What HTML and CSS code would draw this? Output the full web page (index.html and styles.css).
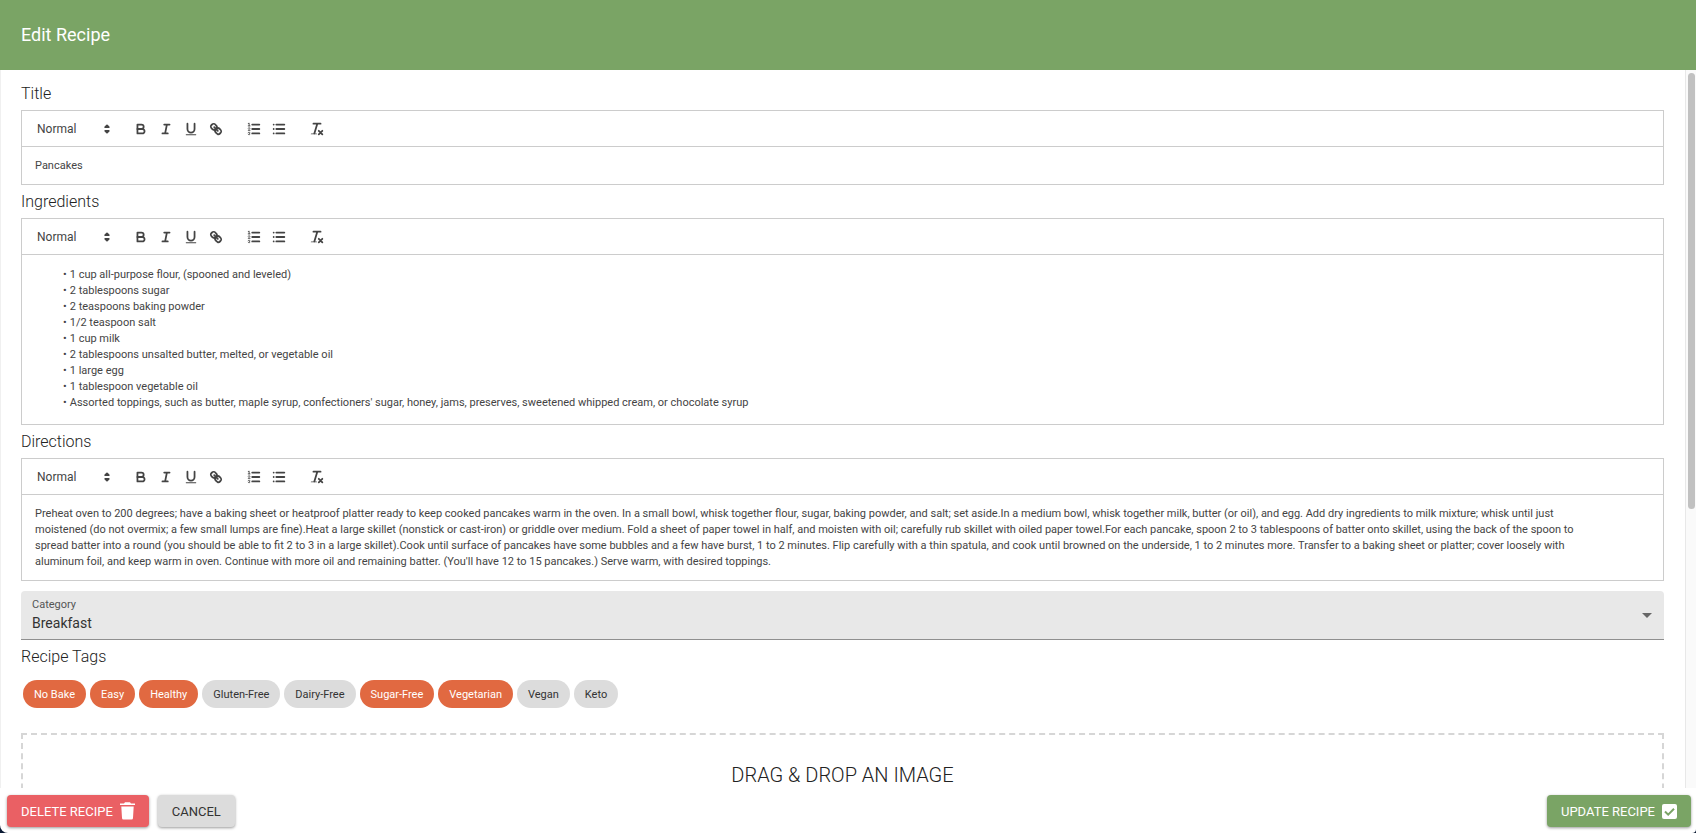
FILE: index.html
```html
<!DOCTYPE html>
<html lang="en">
<head>
<meta charset="utf-8">
<title>Edit Recipe</title>
<link rel="stylesheet" href="styles.css">
</head>
<body>
<svg class="sprite" aria-hidden="true">
  <defs>
    <symbol id="i-bold" viewBox="0 0 18 18"><path class="s" d="M5,4H9.5A2.5,2.5,0,0,1,12,6.5v0A2.5,2.5,0,0,1,9.5,9H5V4Z"/><path class="s" d="M5,9h5.5A2.5,2.5,0,0,1,13,11.5v0A2.5,2.5,0,0,1,10.5,14H5V9Z"/></symbol>
    <symbol id="i-italic" viewBox="0 0 18 18"><path class="s" d="M7 4H13M5 14H11M8 14L10 4"/></symbol>
    <symbol id="i-underline" viewBox="0 0 18 18"><path class="s" d="M5,3V9a4.012,4.012,0,0,0,4,4H9a4.012,4.012,0,0,0,4-4V3"/><rect class="f" height="1" rx=".5" ry=".5" width="12" x="3" y="15"/></symbol>
    <symbol id="i-link" viewBox="0 0 18 18"><path class="s" d="M7 7L11 11"/><path class="s" d="M8.9,4.577a3.476,3.476,0,0,1,.36,4.679A3.476,3.476,0,0,1,4.577,8.9C3.185,7.5,2.035,6.4,4.217,4.217S7.5,3.185,8.9,4.577Z"/><path class="s" d="M13.423,9.1a3.476,3.476,0,0,0-4.679-.36,3.476,3.476,0,0,0,.36,4.679c1.392,1.392,2.5,2.542,4.679.36S14.815,10.5,13.423,9.1Z"/></symbol>
    <symbol id="i-ordered" viewBox="0 0 18 18"><path class="s" d="M7 4H15M7 9H15M7 14H15"/><path class="t" d="M2.5 5.5H4.5"/><path class="f" d="M3.5,6A0.5,0.5,0,0,1,3,5.5V3.085l-0.276.138A0.5,0.5,0,0,1,2.053,3c-0.124-.247-0.023-0.324.224-0.447l1-.5A0.5,0.5,0,0,1,4,2.5v3A0.5,0.5,0,0,1,3.5,6Z"/><path class="t" d="M4.5,10.5h-2c0-.234,1.85-1.076,1.85-2.234A0.959,0.959,0,0,0,2.5,8.156"/><path class="t" d="M2.5,14.846a0.959,0.959,0,0,0,1.85-.109A0.7,0.7,0,0,0,3.75,14a0.688,0.688,0,0,0,.6-0.736,0.959,0.959,0,0,0-1.85-.109"/></symbol>
    <symbol id="i-bullet" viewBox="0 0 18 18"><path class="s" d="M6 4H15M6 9H15M6 14H15M3 4H3.01M3 9H3.01M3 14H3.01"/></symbol>
    <symbol id="i-clean" viewBox="0 0 18 18"><path class="s" d="M5 3H13M6 14L9.35 3M11 11L15 15M15 11L11 15"/><rect class="f" height="1" rx=".5" ry=".5" width="7" x="2" y="14"/></symbol>
    <symbol id="i-sort" viewBox="0 0 18 18"><path class="fs" d="M7 11L9 13L11 11ZM7 7L9 5L11 7Z"/></symbol>
  </defs>
</svg>
<form class="dialog" aria-labelledby="dialog-title">
  <header class="dialog-header"><h1 id="dialog-title">Edit Recipe</h1></header>
  <div class="scroller">
    <main class="content">
      <h2 id="l-title">Title</h2>
      <section class="editor">
        <div class="toolbar">
          <span class="picker"><select aria-label="Title text style"><option>Normal</option><option>Heading</option></select><svg class="icon"><use href="#i-sort"/></svg></span>
          <div class="tools"><button type="button" aria-label="Bold"><svg class="icon"><use href="#i-bold"/></svg></button><button type="button" aria-label="Italic"><svg class="icon"><use href="#i-italic"/></svg></button><button type="button" aria-label="Underline"><svg class="icon"><use href="#i-underline"/></svg></button><button type="button" aria-label="Link"><svg class="icon"><use href="#i-link"/></svg></button></div>
          <div class="tools"><button type="button" aria-label="Numbered list"><svg class="icon"><use href="#i-ordered"/></svg></button><button type="button" aria-label="Bulleted list"><svg class="icon"><use href="#i-bullet"/></svg></button></div>
          <div class="tools"><button type="button" aria-label="Clear formatting"><svg class="icon"><use href="#i-clean"/></svg></button></div>
        </div>
        <div class="editor-body" contenteditable="true" role="textbox" aria-labelledby="l-title" spellcheck="false"><p>Pancakes</p></div>
      </section>

      <h2 id="l-ingredients">Ingredients</h2>
      <section class="editor">
        <div class="toolbar">
          <span class="picker"><select aria-label="Ingredients text style"><option>Normal</option><option>Heading</option></select><svg class="icon"><use href="#i-sort"/></svg></span>
          <div class="tools"><button type="button" aria-label="Bold"><svg class="icon"><use href="#i-bold"/></svg></button><button type="button" aria-label="Italic"><svg class="icon"><use href="#i-italic"/></svg></button><button type="button" aria-label="Underline"><svg class="icon"><use href="#i-underline"/></svg></button><button type="button" aria-label="Link"><svg class="icon"><use href="#i-link"/></svg></button></div>
          <div class="tools"><button type="button" aria-label="Numbered list"><svg class="icon"><use href="#i-ordered"/></svg></button><button type="button" aria-label="Bulleted list"><svg class="icon"><use href="#i-bullet"/></svg></button></div>
          <div class="tools"><button type="button" aria-label="Clear formatting"><svg class="icon"><use href="#i-clean"/></svg></button></div>
        </div>
        <div class="editor-body" contenteditable="true" role="textbox" aria-labelledby="l-ingredients" spellcheck="false">
          <ul>
            <li>1 cup all-purpose flour, (spooned and leveled)</li>
            <li>2 tablespoons sugar</li>
            <li>2 teaspoons baking powder</li>
            <li>1/2 teaspoon salt</li>
            <li>1 cup milk</li>
            <li>2 tablespoons unsalted butter, melted, or vegetable oil</li>
            <li>1 large egg</li>
            <li>1 tablespoon vegetable oil</li>
            <li>Assorted toppings, such as butter, maple syrup, confectioners' sugar, honey, jams, preserves, sweetened whipped cream, or chocolate syrup</li>
          </ul>
        </div>
      </section>

      <h2 id="l-directions">Directions</h2>
      <section class="editor">
        <div class="toolbar">
          <span class="picker"><select aria-label="Directions text style"><option>Normal</option><option>Heading</option></select><svg class="icon"><use href="#i-sort"/></svg></span>
          <div class="tools"><button type="button" aria-label="Bold"><svg class="icon"><use href="#i-bold"/></svg></button><button type="button" aria-label="Italic"><svg class="icon"><use href="#i-italic"/></svg></button><button type="button" aria-label="Underline"><svg class="icon"><use href="#i-underline"/></svg></button><button type="button" aria-label="Link"><svg class="icon"><use href="#i-link"/></svg></button></div>
          <div class="tools"><button type="button" aria-label="Numbered list"><svg class="icon"><use href="#i-ordered"/></svg></button><button type="button" aria-label="Bulleted list"><svg class="icon"><use href="#i-bullet"/></svg></button></div>
          <div class="tools"><button type="button" aria-label="Clear formatting"><svg class="icon"><use href="#i-clean"/></svg></button></div>
        </div>
        <div class="editor-body" contenteditable="true" role="textbox" aria-labelledby="l-directions" spellcheck="false"><p>Preheat oven to 200 degrees; have a baking sheet or heatproof platter ready to keep cooked pancakes warm in the oven. In a small bowl, whisk together flour, sugar, baking powder, and salt; set aside.In a medium bowl, whisk together milk, butter (or oil), and egg. Add dry ingredients to milk mixture; whisk until just<br>moistened (do not overmix; a few small lumps are fine).Heat a large skillet (nonstick or cast-iron) or griddle over medium. Fold a sheet of paper towel in half, and moisten with oil; carefully rub skillet with oiled paper towel.For each pancake, spoon 2 to 3 tablespoons of batter onto skillet, using the back of the spoon to<br>spread batter into a round (you should be able to fit 2 to 3 in a large skillet).Cook until surface of pancakes have some bubbles and a few have burst, 1 to 2 minutes. Flip carefully with a thin spatula, and cook until browned on the underside, 1 to 2 minutes more. Transfer to a baking sheet or platter; cover loosely with<br>aluminum foil, and keep warm in oven. Continue with more oil and remaining batter. (You'll have 12 to 15 pancakes.) Serve warm, with desired toppings.</p></div>
      </section>

      <div class="field">
        <label for="category">Category</label>
        <select id="category"><option>Breakfast</option><option>Lunch</option><option>Dinner</option></select>
        <svg class="caret" viewBox="0 0 10 5" aria-hidden="true"><path d="M0 0H10L5 5Z"/></svg>
      </div>

      <h2>Recipe Tags</h2>
      <div class="chips">
        <button type="button" class="chip" aria-pressed="true">No Bake</button>
        <button type="button" class="chip" aria-pressed="true">Easy</button>
        <button type="button" class="chip" aria-pressed="true">Healthy</button>
        <button type="button" class="chip" aria-pressed="false">Gluten-Free</button>
        <button type="button" class="chip" aria-pressed="false">Dairy-Free</button>
        <button type="button" class="chip" aria-pressed="true">Sugar-Free</button>
        <button type="button" class="chip" aria-pressed="true">Vegetarian</button>
        <button type="button" class="chip" aria-pressed="false">Vegan</button>
        <button type="button" class="chip" aria-pressed="false">Keto</button>
      </div>
      <div class="dropzone">DRAG &amp; DROP AN IMAGE</div>
    </main>
    <div class="rail" aria-hidden="true"><div class="thumb"></div></div>
  </div>
  <footer class="actions">
    <button type="button" class="btn danger">DELETE RECIPE<svg viewBox="0 0 15 18" aria-hidden="true"><path d="M0 1.5H4L5 .3H10L11 1.5H15V3H0ZM1.300 4.500H13.700L13 16Q13 17.500 11.500 17.500H3.500Q2 17.500 2 16Z"/></svg></button>
    <button type="button" class="btn">CANCEL</button>
    <button type="submit" class="btn primary">UPDATE RECIPE<svg viewBox="0 0 15 15" aria-hidden="true"><rect width="15" height="15" rx="2"/><path class="tick" d="M3 7.500L6.200 10.700L12 4.800"/></svg></button>
  </footer>
</form>
</body>
</html>
```
FILE: styles.css
```css
* { box-sizing: border-box; }
body {
  margin: 0;
  background: #0a1a33;
  font-family: Roboto, sans-serif;
  color: #444;
}
button, select { font-family: inherit; }
h1, h2, p, ul { margin: 0; padding: 0; }
.sprite { position: absolute; width: 0; height: 0; }
.s, .t, .fs { fill: none; stroke: #444; stroke-linecap: round; stroke-linejoin: round; stroke-width: 2; }
.t { stroke-width: 1; }
.f, .fs { fill: #444; }

.dialog {
  display: flex;
  flex-direction: column;
  height: 100vh;
  background: #fff;
  border-radius: 0 0 4px 8px;
  overflow: hidden;
}
.dialog-header {
  flex: none;
  padding: 20px 21px;
  background: #7aa465;
  color: #fff;
}
.dialog-header h1 { font-size: 18px; line-height: 30px; font-weight: 400; }

.scroller { flex: 1; min-height: 0; display: flex; border-left: 1px solid #f0f0f0; }
.content {
  flex: 1;
  min-width: 0;
  padding: 7px 21px 24px 20px;
  overflow-y: auto;
  scrollbar-width: none;
}
.rail { flex: none; width: 11px; padding: 3px 1px 0 2px; background: #fafafa; border-left: 1px solid #e8e8e8; }
.thumb { height: 61%; border-radius: 4px; background: #c1c1c1; }

h2 { padding-top: 1px; font-size: 16px; line-height: 32px; font-weight: 300; color: #222; }

.editor { border: 1px solid #ccc; }
.toolbar {
  display: flex;
  align-items: center;
  gap: 13px;
  padding: 6px 7px;
  border-bottom: 1px solid #ccc;
}
.icon { display: block; width: 16px; height: 16px; }
.picker { display: grid; align-items: center; width: 86px; height: 23px; }
.picker select, .picker .icon { grid-area: 1 / 1; }
.picker .icon { justify-self: end; pointer-events: none; }
.picker select {
  appearance: none;
  height: 23px;
  padding: 0 8px;
  border: 0;
  background: none;
  color: #444;
  font-size: 12px;
}
.tools { display: flex; }
.tools button {
  display: grid;
  place-items: center;
  width: 25px;
  height: 23px;
  padding: 0;
  border: 0;
  background: none;
}
.editor-body { padding: 11px 13px 10px; font-size: 11px; line-height: 16px; color: #444; outline: 0; }
.editor-body ul { padding: 1px 0 3px 28px; list-style: none; }
.editor-body li::before { content: "•"; margin-right: 3px; }

.field {
  display: grid;
  align-items: center;
  margin-top: 10px;
  background: #e8e8e8;
  border-bottom: 1px solid #8f8f8f;
  border-radius: 4px 4px 0 0;
}
.field label { grid-area: 1 / 1; align-self: start; padding: 7px 11px 0; font-size: 11px; line-height: 14px; color: #555; }
.field select {
  grid-area: 1 / 1;
  appearance: none;
  height: 48px;
  padding: 15px 11px 0;
  border: 0;
  background: none;
  color: #333;
  font-size: 14px;
}
.caret { grid-area: 1 / 1; justify-self: end; width: 10px; height: 5px; margin-right: 12px; fill: #666; pointer-events: none; }

.chips { display: flex; flex-wrap: wrap; gap: 4px; padding: 7px 2px; }
.chip {
  height: 28px;
  padding: 0 11px;
  border: 0;
  border-radius: 14px;
  background: #dcdcdc;
  color: #333;
  font-size: 11px;
}
.chip[aria-pressed="true"] { background: #e16941; color: #fff; }

.dropzone {
  margin-top: 18px;
  padding: 27px 0 60px;
  border: 2px dashed #d6d6d6;
  text-align: center;
  font-size: 20px;
  line-height: 26px;
  font-weight: 300;
  color: #222;
}

.actions { flex: none; display: flex; gap: 9px; padding: 7px 5px 6px 7px; }
.btn {
  display: flex;
  align-items: center;
  gap: 7px;
  height: 32px;
  padding: 0 14px;
  border: 0;
  border-radius: 4px;
  background: #dcdcdc;
  color: #333;
  font-size: 13px;
  box-shadow: 0 1px 3px rgba(0, 0, 0, .4);
}
.btn svg { width: 15px; fill: #fff; }
.danger { background: #ea6064; color: #fff; }
.primary { margin-left: auto; background: #7aa465; color: #fff; }
.tick { fill: none; stroke: #7aa465; stroke-width: 2; }
```
